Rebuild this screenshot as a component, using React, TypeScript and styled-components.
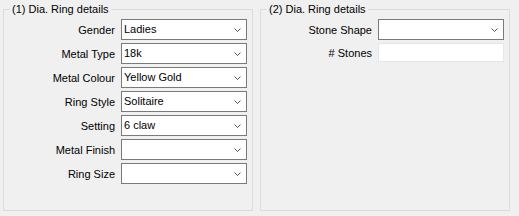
import React from "react";
import styled, { createGlobalStyle } from "styled-components";

const Global = createGlobalStyle`
  html, body { margin: 0; padding: 0; background: #f0f0f0; }
  body { font-family: "Liberation Sans", Arial, sans-serif; font-size: 11px; color: #000; }
`;

const Page = styled.div`
  display: flex;
  gap: 7px;
  padding: 3px 0 0 3px;
`;

const Group = styled.fieldset`
  box-sizing: border-box;
  width: 250px;
  height: 208px;
  margin: 0;
  padding: 3px 0 0 0;
  border: 1px solid #dcdcdc;
  min-width: 0;
`;

const Legend = styled.legend`
  margin-left: 6px;
  padding: 0 2px;
  font-size: 11px;
  line-height: 13px;
`;

const Form = styled.div`
  display: grid;
  grid-template-columns: 111px 126px;
  column-gap: 6px;
  row-gap: 3px;
  align-items: center;
`;

const Label = styled.div`
  text-align: right;
  white-space: nowrap;
  line-height: 13px;
  padding-top: 2px;
`;

const Combo = styled.div`
  box-sizing: border-box;
  height: 21px;
  border: 1px solid #7a7a7a;
  background: #fff;
  display: flex;
  align-items: center;
  justify-content: space-between;
  padding: 0 5px 0 2px;
  line-height: 13px;
  padding-bottom: 1px;
`;

const TextBox = styled.div<{ $mt?: number }>`
  box-sizing: border-box;
  height: 19px;
  border: 1px solid #e6e6e6;
  background: #fff;
`;

const Chevron = () => (
  <svg width="7" height="4" viewBox="0 0 7 4" style={{ marginTop: 2 }}>
    <polyline points="0.5,0.5 3.5,3.5 6.5,0.5" fill="none" stroke="#555" strokeWidth="1" />
  </svg>
);

const Field = ({ label, value }: { label: string; value?: string }) => (
  <>
    <Label>{label}</Label>
    <Combo>
      <span>{value ?? ""}</span>
      <Chevron />
    </Combo>
  </>
);

export default function App() {
  return (
    <>
      <Global />
      <Page>
        <Group>
          <Legend>(1) Dia. Ring details</Legend>
          <Form>
            <Field label="Gender" value="Ladies" />
            <Field label="Metal Type" value="18k" />
            <Field label="Metal Colour" value="Yellow Gold" />
            <Field label="Ring Style" value="Solitaire" />
            <Field label="Setting" value="6 claw" />
            <Field label="Metal Finish" />
            <Field label="Ring Size" />
          </Form>
        </Group>
        <Group>
          <Legend>(2) Dia. Ring details</Legend>
          <Form>
            <Field label="Stone Shape" />
            <Label># Stones</Label>
            <TextBox />
          </Form>
        </Group>
      </Page>
    </>
  );
}
